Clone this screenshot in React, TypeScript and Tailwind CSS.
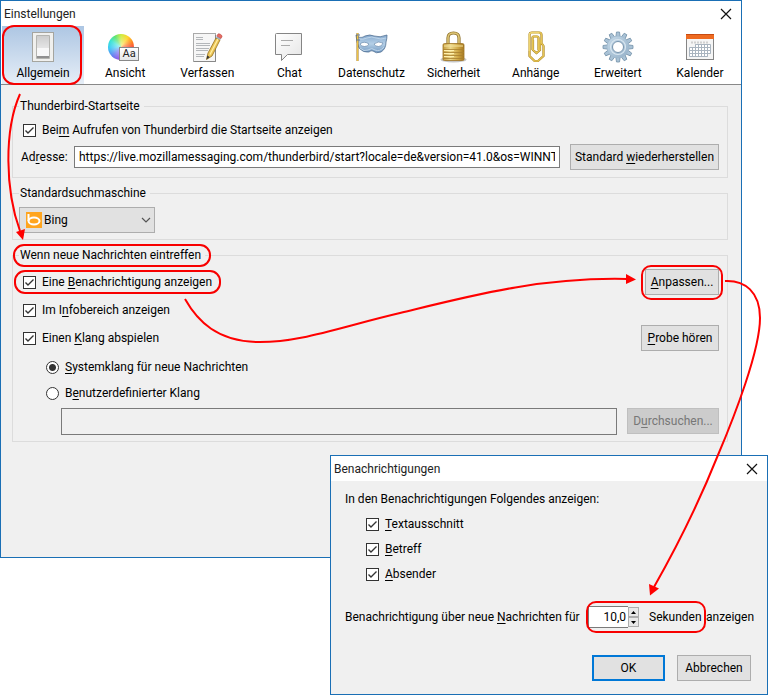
import type { ReactNode } from "react";

const ring = "pointer-events-none absolute border-2 border-[#f80000]";
const btn =
  "h-[26px] shrink-0 whitespace-nowrap border border-[#adadad] bg-[#e1e1e1] text-center text-black";

function U({ children }: { children: ReactNode }) {
  return <span className="underline underline-offset-2">{children}</span>;
}

function SwitchIcon() {
  return (
    <svg width="32" height="32" viewBox="0 0 32 32" aria-hidden="true">
      <defs>
        <linearGradient id="sw" x1="0" y1="0" x2="0" y2="1">
          <stop offset="0" stopColor="#cdcdcd" />
          <stop offset="1" stopColor="#e9e9e9" />
        </linearGradient>
      </defs>
      <rect x="5.5" y="1.5" width="21" height="29" fill="#f0f0ee" stroke="#a5a59f" />
      <rect x="9" y="4" width="14" height="24" rx="1" fill="#b4b4b0" />
      <rect x="10" y="5" width="12" height="14" fill="url(#sw)" />
      <rect x="10" y="17" width="12" height="8" fill="#f8f8f8" />
      <path d="M10 25H22V27H10Z" fill="#909090" />
    </svg>
  );
}

function AppearanceIcon() {
  return (
    <span className="relative block h-8 w-8">
      <span className="absolute top-[3px] left-[-1px] h-[26px] w-[26px] rounded-full bg-[radial-gradient(circle_at_45%_45%,rgba(255,255,255,.6),transparent_65%),conic-gradient(#c8ea2c,#ffd21e_35deg,#ff7a20_70deg,#f5344f_105deg,#ee55b4_150deg,#9a5be8_190deg,#5f7df0_225deg,#27c4f4_265deg,#1de0cf_300deg,#45e05c_330deg,#c8ea2c)]" />
      <span className="absolute top-4 left-[10px] flex h-[14px] w-5 items-center justify-center border border-[#888] bg-[linear-gradient(#fff,#e4e6e8)] text-[11px] leading-3 text-[#222]">
        Aa
      </span>
    </span>
  );
}

function ComposeIcon() {
  return (
    <svg width="32" height="32" viewBox="0 0 32 32" aria-hidden="true">
      <rect x="2.5" y="2.5" width="22" height="28" fill="#f6f6f6" stroke="#aaa" />
      <path d="M24.5 4V30.5H3" fill="none" stroke="#888" />
      <path d="M5 6.5H12M5 8.5H12M5 12.5H19M5 14.5H19M5 17.5H18M5 19.5H17M5 23.5H14M5 25.5H13" stroke="#b4b7ba" />
      <path d="M15.500 28.500L17 22L25 7L29 9L21 25Z" fill="#ecc557" stroke="#94701d" strokeWidth=".8" />
      <path d="M19 23.500L27 8" stroke="#fff0a6" strokeWidth="1.200" />
      <path d="M15.500 28.500L16.300 24.500L18.700 26Z" fill="#333" />
      <path d="M25 6.500L29.300 9L30 7.500L25.800 5Z" fill="#9bafc0" />
      <path d="M25.800 5L27 3C28 2.300 31.500 4 31 5.700L30 7.500Z" fill="#e66d64" stroke="#bf4a46" strokeWidth=".6" />
    </svg>
  );
}

function ChatIcon() {
  return (
    <svg width="32" height="32" viewBox="0 0 32 32" aria-hidden="true">
      <defs>
        <linearGradient id="ch" x1="0" y1="0" x2="1" y2="1">
          <stop offset="0" stopColor="#fff" />
          <stop offset="1" stopColor="#e5e5e5" />
        </linearGradient>
      </defs>
      <path
        d="M3.500 2.500H28.500V23.500H14.500L8.500 29.500V23.500H2.500V3.500Q2.500 2.500 3.500 2.500Z"
        fill="url(#ch)"
        stroke="#858585"
      />
      <path d="M8 9.500H20M8 14.500H17" stroke="#aaa" />
    </svg>
  );
}

function MaskIcon() {
  return (
    <svg width="34" height="32" viewBox="0 0 34 32" aria-hidden="true">
      <defs>
        <linearGradient id="mk" x1="0" y1="0" x2="0" y2="1">
          <stop offset="0" stopColor="#86a9cf" />
          <stop offset=".5" stopColor="#b5d0e7" />
          <stop offset="1" stopColor="#6f96c0" />
        </linearGradient>
      </defs>
      <path
        d="M2 4C5 7 8 7 11 5Q16 3 20 5Q26 7 33 4Q33 8 32 11Q32 18 27 21Q22 23 19 20Q17 19 15 21Q9 22 5 17L3 11Z"
        fill="url(#mk)"
        stroke="#547294"
        strokeWidth=".8"
      />
      <path d="M4 8Q9 9 13 7Q18 5 22 7Q27 9 32 7M6 17Q10 21 14 19Q18 16 21 19Q26 21 30 16" fill="none" stroke="#bdd4e8" />
      <path d="M6 13Q10 9.500 15 13Q14 15.500 10.500 15.500Q7 15.500 6 13ZM20 13Q24 9.500 29 12Q28 15.500 24.500 15.500Q21 15.500 20 13Z" fill="#fff" stroke="#56799f" strokeWidth=".6" />
      <path d="M3.500 2V30" stroke="#9e7421" strokeWidth="2" />
      <path d="M3.500 2V30" stroke="#edc343" />
      <path d="M2 4H6M2 9H6" stroke="#657b95" />
    </svg>
  );
}

function LockIcon() {
  return (
    <svg width="32" height="32" viewBox="0 0 32 32" aria-hidden="true">
      <defs>
        <linearGradient id="lk" x1="0" y1="0" x2="1" y2="0">
          <stop offset="0" stopColor="#c49a3a" />
          <stop offset=".35" stopColor="#edd98c" />
          <stop offset=".7" stopColor="#d0a947" />
          <stop offset="1" stopColor="#a67820" />
        </linearGradient>
      </defs>
      <ellipse cx="15.500" cy="28.500" rx="13" ry="3" fill="#8b8b8b" opacity=".5" />
      <path d="M10 14V7Q10 2 15.500 2Q21 2 21 7V14" fill="none" stroke="#90722b" strokeWidth="3.200" />
      <path d="M10 14V7Q10 2 15.500 2Q21 2 21 7V14" fill="none" stroke="#dfc777" strokeWidth="1.600" />
      <rect x="5" y="12.500" width="21" height="17" rx="1.500" fill="url(#lk)" stroke="#9e7425" strokeWidth=".8" />
      <path d="M6 15H25" stroke="#f5e4a0" />
      <path d="M5 18.500H26M5 21.500H26M5 24.500H26M5 27.500H26" stroke="#a8802e" strokeWidth=".8" />
      <path d="M6 19.500H16M6 22.500H16M6 25.500H16" stroke="#fff0ad" />
    </svg>
  );
}

function ClipIcon() {
  const clip = "M13 9V19L16.500 22L20 19V9M12.500 19V6.500Q12.500 5.500 13.500 5.500H17Q18.500 5.500 18.500 7V19M9.500 22V4Q9.500 1.500 12 1.500H19Q21.500 1.500 21.500 4V12L23.500 15V25L18 30H14.500L9.500 25Z";
  return (
    <svg width="32" height="32" viewBox="0 0 32 32" aria-hidden="true">
      <path d={clip} fill="none" stroke="#a07a24" strokeWidth="2.200" />
      <path d={clip} fill="none" stroke="#e6c553" strokeWidth="1.400" />
      <path d="M9 20V4Q9 2 11 2H19" fill="none" stroke="#fff1a4" strokeWidth=".7" />
    </svg>
  );
}

function GearIcon() {
  const teeth = [0, 30, 60, 90, 120, 150, 180, 210, 240, 270, 300, 330];
  return (
    <svg width="32" height="32" viewBox="0 0 32 32" aria-hidden="true">
      <defs>
        <linearGradient id="gr" x1="0" y1="0" x2="1" y2="1">
          <stop offset="0" stopColor="#c6dae9" />
          <stop offset="1" stopColor="#94b0c8" />
        </linearGradient>
      </defs>
      {teeth.map((a) => (
        <path key={a} d="M13.800 6L14.500 1H17.500L18.200 6Z" transform={`rotate(${a} 16 16)`} fill="#a9c2d6" stroke="#7592aa" strokeWidth=".8" />
      ))}
      <circle cx="16" cy="16" r="11" fill="url(#gr)" stroke="#9db7cb" strokeWidth=".6" />
      <circle cx="16" cy="16" r="7.500" fill="none" stroke="#d8e6f0" strokeWidth="1.200" />
      <circle cx="16" cy="16" r="5.500" fill="#fff" stroke="#7895ae" />
    </svg>
  );
}

function CalendarIcon() {
  return (
    <svg width="32" height="32" viewBox="0 0 32 32" aria-hidden="true">
      <rect x="2.500" y="3.500" width="27" height="25" fill="#f5f5f5" stroke="#858585" />
      <rect x="2" y="3" width="28" height="5" fill="#ee6a20" />
      <path d="M2 3.500H30" stroke="#c74b12" />
      <path d="M7 11.500H24" stroke="#d0d0d0" strokeWidth="2" strokeDasharray="2 1" />
      <path
        d="M11.500 13.500H26.500V22.500H23.500V25.500H5.500V16.500H11.500ZM5.500 19.500H26.500M5.500 22.500H26.500M11.500 16.500H26.500M8.500 16.500V25.500M11.500 13.500V25.500M14.500 13.500V25.500M17.500 13.500V25.500M20.500 13.500V25.500M23.500 13.500V25.500"
        fill="#fff"
        stroke="#a9b4bf"
      />
    </svg>
  );
}

const tabs = [
  { name: "Allgemein", icon: <SwitchIcon /> },
  { name: "Ansicht", icon: <AppearanceIcon /> },
  { name: "Verfassen", icon: <ComposeIcon /> },
  { name: "Chat", icon: <ChatIcon /> },
  { name: "Datenschutz", icon: <MaskIcon /> },
  { name: "Sicherheit", icon: <LockIcon /> },
  { name: "Anhänge", icon: <ClipIcon /> },
  { name: "Erweitert", icon: <GearIcon /> },
  { name: "Kalender", icon: <CalendarIcon /> },
];

function Check({ children, ringed }: { children: ReactNode; ringed?: boolean }) {
  return (
    <label className="relative flex items-center gap-1.5 whitespace-nowrap">
      <span className="relative block h-[13px] w-[13px]">
        <input type="checkbox" defaultChecked className="block h-[13px] w-[13px] appearance-none border border-[#333] bg-white" />
        <svg className="pointer-events-none absolute inset-0" width="13" height="13" viewBox="0 0 13 13" aria-hidden="true">
          <path d="M2.500 6.500L5 9L10.500 3.500" fill="none" stroke="#333" strokeWidth="1.400" />
        </svg>
      </span>
      <span>{children}</span>
      {ringed && <span className={`${ring} -inset-x-[9px] -inset-y-1 rounded-[11px]`} />}
    </label>
  );
}

function Radio({ children, checked }: { children: ReactNode; checked?: boolean }) {
  return (
    <label className="flex h-[26px] items-center gap-1.5 self-start whitespace-nowrap">
      <input
        type="radio"
        name="sound"
        defaultChecked={checked}
        className="h-[13px] w-[13px] appearance-none rounded-full border border-[#333] bg-white checked:bg-[radial-gradient(circle,#333_3px,#fff_4px)]"
      />
      <span>{children}</span>
    </label>
  );
}

function TitleBar({ title }: { title: string }) {
  return (
    <header className="flex h-[25px] items-center justify-between bg-white pr-[9px] pl-[3px] text-[#222]">
      <h2>{title}</h2>
      <button type="button" aria-label="Schließen" className="block">
        <svg width="12" height="12" viewBox="0 0 12 12" aria-hidden="true">
          <path d="M1 1L11 11M11 1L1 11" stroke="#111" strokeWidth="1.200" />
        </svg>
      </button>
    </header>
  );
}

function Group({ title, className, ringed, children }: { title: string; className: string; ringed?: boolean; children: ReactNode }) {
  return (
    <fieldset className={`min-w-0 border border-[#dcdcdc] pr-2 pl-1.5 ${className}`}>
      <legend className="relative pr-1 pl-px">
        {title}
        {ringed && <span className={`${ring} -inset-x-1.5 -top-[3px] -bottom-1 rounded-[11px]`} />}
      </legend>
      {children}
    </fieldset>
  );
}

export default function App() {
  return (
    <div className="relative overflow-hidden bg-white font-[Roboto,'Open_Sans',sans-serif] text-[12px] leading-4 text-black">
      <main className="mr-[26px] border border-[#1a6fb5] bg-[#f0f0f0]">
        <TitleBar title="Einstellungen" />
        <nav className="flex border-b border-[#888] bg-white pl-px">
          {tabs.map((t, i) => (
            <button
              type="button"
              key={t.name}
              className={`relative flex h-[58px] flex-1 basis-0 flex-col items-center pt-[5px] ${i === 0 ? "bg-[linear-gradient(#adc6e3,#e6eef7)]" : ""}`}
            >
              {t.icon}
              <span className="mt-0.5">{t.name}</span>
              {i === 0 && <span className={`${ring} -top-px right-0.5 -bottom-px left-0 rounded-[12px]`} />}
            </button>
          ))}
        </nav>

        <div className="flex flex-col gap-[7px] pt-[13px] pr-[13px] pb-[115px] pl-[11px]">
          <Group title="Thunderbird-Startseite" className="pb-[7px]">
            <div className="mt-2 mb-1.5 flex pl-1">
              <Check>
                Bei<U>m</U> Aufrufen von Thunderbird die Startseite anzeigen
              </Check>
            </div>
            <div className="flex items-center gap-2.5 pl-0.5">
              <label htmlFor="address" className="w-[43px] shrink-0 whitespace-nowrap">
                Ad<U>r</U>esse:
              </label>
              <input
                id="address"
                type="text"
                defaultValue="https://live.mozillamessaging.com/thunderbird/start?locale=de&version=41.0&os=WINNT"
                className="h-[22px] min-w-0 flex-1 border border-[#7a7a7a] bg-white px-1"
              />
              <button type="button" className={`${btn} w-[149px]`}>
                Standard <U>w</U>iederherstellen
              </button>
            </div>
          </Group>

          <Group title="Standardsuchmaschine" className="pb-1.5">
            <div className="relative mt-1.5 w-[136px]">
              <select aria-label="Standardsuchmaschine" className="block h-[26px] w-full appearance-none border border-[#adadad] bg-[#e1e1e1] pl-6">
                <option>Bing</option>
              </select>
              <svg className="pointer-events-none absolute top-[5px] left-[7px]" width="16" height="16" viewBox="0 0 16 16" aria-hidden="true">
                <rect width="16" height="16" fill="#ffa51f" />
                <path d="M2.500 2V9" stroke="#fff" strokeWidth="2" />
                <ellipse cx="8" cy="9" rx="5.500" ry="3.500" fill="none" stroke="#fff" strokeWidth="2" />
              </svg>
              <svg className="pointer-events-none absolute top-2.5 right-1" width="10" height="6" viewBox="0 0 10 6" aria-hidden="true">
                <path d="M1 1L5 5L9 1" fill="none" stroke="#555" strokeWidth="1.200" />
              </svg>
            </div>
          </Group>

          <Group title="Wenn neue Nachrichten eintreffen" className="pb-1.5" ringed>
            <div className="mt-1.5 flex flex-col gap-0.5 pl-1">
              <div className="flex h-[26px] items-center justify-between">
                <Check ringed>
                  Eine <U>B</U>enachrichtigung anzeigen
                </Check>
                <div className="relative">
                  <button type="button" className={`${btn} block w-[74px]`}>
                    <U>A</U>npassen...
                  </button>
                  <span className={`${ring} -inset-x-1 -top-1 -bottom-[5px] rounded-[10px]`} />
                </div>
              </div>
              <div className="flex h-[26px] items-center">
                <Check>
                  Im I<U>n</U>fobereich anzeigen
                </Check>
              </div>
              <div className="flex h-[26px] items-center justify-between">
                <Check>
                  Einen <U>K</U>lang abspielen
                </Check>
                <button type="button" className={`${btn} w-[78px]`}>
                  <U>P</U>robe hören
                </button>
              </div>
            </div>
            <div className="mt-[3px] flex flex-col pl-[27px]">
              <Radio checked>
                <U>S</U>ystemklang für neue Nachrichten
              </Radio>
              <Radio>
                B<U>e</U>nutzerdefinierter Klang
              </Radio>
            </div>
            <div className="mt-0.5 flex gap-2.5 pl-[42px]">
              <input type="text" aria-label="Klangdatei" readOnly className="h-[27px] min-w-0 flex-1 border border-[#7a7a7a] bg-[#f0f0f0] px-1" />
              <button type="button" disabled className="h-[26px] w-[92px] shrink-0 border border-[#bfbfbf] bg-[#cccccc] text-center whitespace-nowrap text-[#777]">
                D<U>u</U>rchsuchen...
              </button>
            </div>
          </Group>
        </div>
      </main>

      <section className="relative -mt-[103px] ml-auto w-[438px] border border-[#1a6fb5] bg-[#f0f0f0]">
        <TitleBar title="Benachrichtigungen" />
        <div className="pt-2.5 pr-4 pb-[13px] pl-3.5">
          <p>In den Benachrichtigungen Folgendes anzeigen:</p>
          <div className="mt-[9px] flex flex-col items-start gap-[9px] pl-[21px]">
            <Check>
              <U>T</U>extausschnitt
            </Check>
            <Check>
              <U>B</U>etreff
            </Check>
            <Check>
              <U>A</U>bsender
            </Check>
          </div>
          <div className="mt-6 flex items-center whitespace-nowrap">
            <label htmlFor="seconds" className="w-[243px] shrink-0">
              Benachrichtigung über neue <U>N</U>achrichten für
            </label>
            <div className="relative flex h-[22px] w-[116px] shrink-0 items-center">
              <input id="seconds" type="text" defaultValue="10,0" className="h-[22px] w-10 border-y border-l border-[#7a7a7a] bg-white pr-0.5 text-right" />
              <div className="flex flex-col">
                <button type="button" aria-label="Mehr" className="flex h-2.5 w-[11px] items-center justify-center border border-[#adadad] bg-[#e8e8e8]">
                  <svg width="5" height="3" viewBox="0 0 5 3" aria-hidden="true">
                    <path d="M0 3L2.500 0L5 3Z" />
                  </svg>
                </button>
                <button type="button" aria-label="Weniger" className="flex h-2.5 w-[11px] items-center justify-center border border-[#adadad] bg-[#e8e8e8]">
                  <svg width="5" height="3" viewBox="0 0 5 3" aria-hidden="true">
                    <path d="M0 0L2.500 3L5 0Z" />
                  </svg>
                </button>
              </div>
              <span className="ml-2.5">Sekunden</span>
              <span className={`${ring} -inset-x-0.5 -inset-y-[5px] rounded-[10px]`} />
            </div>
            <span className="ml-0.5">anzeigen</span>
          </div>
          <div className="mt-[27px] flex justify-end gap-3">
            <button type="button" className="h-[26px] w-[73px] border-2 border-[#0078d7] bg-[#e1e1e1] text-center">
              OK
            </button>
            <button type="button" className={`${btn} w-[74px]`}>
              Abbrechen
            </button>
          </div>
        </div>
      </section>

      <svg className="pointer-events-none absolute top-0 left-0" width="768" height="695" viewBox="0 0 768 695" aria-hidden="true">
        <g fill="none" stroke="#f00" strokeWidth="2">
          <path d="M20 94C4 130 5 190 20 231" />
          <path d="M185 299C198 322 218 341 256 342C300 343 340 327 400 313C470 296 540 277 627 279" />
          <path d="M725 281C745 280 760 292 760 318C760 350 735 415 718 455C700 500 675 550 654 587" />
        </g>
        <g fill="#f00">
          <path d="M23 240L16 232L25 229Z" />
          <path d="M636 279.500L626 274V284Z" />
          <path d="M650 595.500L649 584L659 588.500Z" />
        </g>
      </svg>
    </div>
  );
}
